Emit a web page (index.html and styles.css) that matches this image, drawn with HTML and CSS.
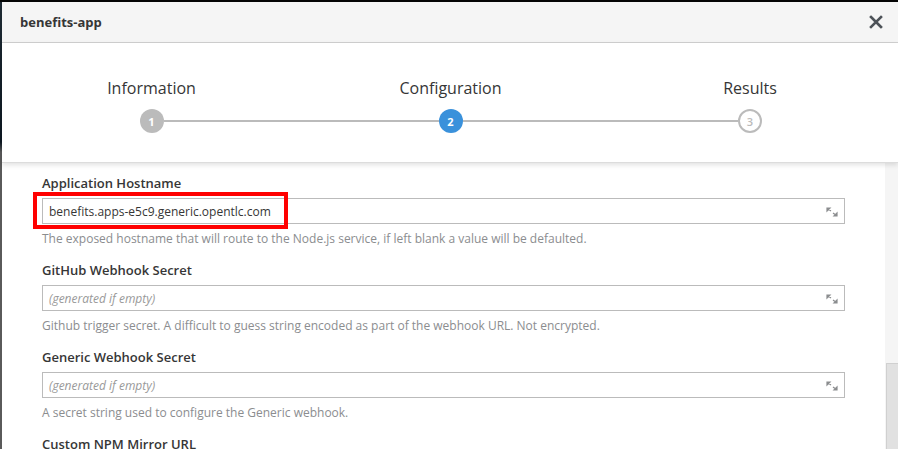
FILE: index.html
```html
<!DOCTYPE html>
<html>
<head>
<meta charset="utf-8">
<link rel="stylesheet" href="styles.css">
</head>
<body>
<div class="screen">
  <div class="edge"></div>
  <div class="modal">
    <div class="modal-header">
      <span class="title">benefits-app</span>
      <svg class="close" width="14" height="14" viewBox="0 0 14 14"><path d="M2 2 L12 12 M12 2 L2 12" stroke="#4d5258" stroke-width="2.6" stroke-linecap="square"/></svg>
    </div>
    <div class="wizard">
      <div class="step first">
        <div class="step-label">Information</div>
        <div class="step-track"><span class="seg"></span><span class="dot done">1</span><span class="seg"></span></div>
      </div>
      <div class="step">
        <div class="step-label">Configuration</div>
        <div class="step-track"><span class="seg"></span><span class="dot active">2</span><span class="seg"></span></div>
      </div>
      <div class="step last">
        <div class="step-label">Results</div>
        <div class="step-track"><span class="seg"></span><span class="dot todo">3</span><span class="seg"></span></div>
      </div>
    </div>
    <div class="body">
      <div class="form">
        <div class="field">
          <div class="label">Application Hostname</div>
          <div class="input-wrap">
            <div class="input"><span class="value">benefits.apps-e5c9.generic.opentlc.com</span>
              <svg class="resize" width="12" height="10" viewBox="0 0 12 10"><path d="M1 1 L4 1 L1 4 Z M1 1 L5 4" stroke="#8b8d8f" stroke-width="1.2" fill="#8b8d8f"/><path d="M11 9 L8 9 L11 6 Z M11 9 L7 6" stroke="#8b8d8f" stroke-width="1.2" fill="#8b8d8f"/></svg>
            </div>
            <div class="highlight"></div>
          </div>
          <div class="help">The exposed hostname that will route to the Node.js service, if left blank a value will be defaulted.</div>
        </div>
        <div class="field">
          <div class="label">GitHub Webhook Secret</div>
          <div class="input-wrap">
            <div class="input"><span class="placeholder">(generated if empty)</span>
              <svg class="resize" width="12" height="10" viewBox="0 0 12 10"><path d="M1 1 L4 1 L1 4 Z M1 1 L5 4" stroke="#8b8d8f" stroke-width="1.2" fill="#8b8d8f"/><path d="M11 9 L8 9 L11 6 Z M11 9 L7 6" stroke="#8b8d8f" stroke-width="1.2" fill="#8b8d8f"/></svg>
            </div>
          </div>
          <div class="help">Github trigger secret. A difficult to guess string encoded as part of the webhook URL. Not encrypted.</div>
        </div>
        <div class="field">
          <div class="label">Generic Webhook Secret</div>
          <div class="input-wrap">
            <div class="input"><span class="placeholder">(generated if empty)</span>
              <svg class="resize" width="12" height="10" viewBox="0 0 12 10"><path d="M1 1 L4 1 L1 4 Z M1 1 L5 4" stroke="#8b8d8f" stroke-width="1.2" fill="#8b8d8f"/><path d="M11 9 L8 9 L11 6 Z M11 9 L7 6" stroke="#8b8d8f" stroke-width="1.2" fill="#8b8d8f"/></svg>
            </div>
          </div>
          <div class="help">A secret string used to configure the Generic webhook.</div>
        </div>
        <div class="field">
          <div class="label">Custom NPM Mirror URL</div>
        </div>
      </div>
      <div class="scrollbar"><div class="thumb"></div></div>
    </div>
  </div>
</div>
</body>
</html>
```
FILE: styles.css
```css
html, body {
  margin: 0;
  padding: 0;
  width: 898px;
  height: 449px;
  overflow: hidden;
  background: #fff;
  font-family: "Open Sans", "Noto Sans", sans-serif;
  color: #363636;
}
.screen {
  display: flex;
  height: 449px;
  border-top: 2px solid #050505;
  box-sizing: border-box;
}
.edge {
  width: 2px;
  flex: none;
  background: linear-gradient(#1e2a33 0, #0d1822 140px, #5a5a5a 150px, #5a5a5a 100%);
}
.modal {
  flex: 1;
  display: flex;
  flex-direction: column;
  min-width: 0;
}
.modal-header {
  height: 40px;
  flex: none;
  background: #f5f5f5;
  border-bottom: 1px solid #d1d1d1;
  display: flex;
  align-items: center;
  justify-content: space-between;
  padding: 0 15px 0 18px;
}
.title {
  font-size: 13px;
  font-weight: 700;
  color: #363636;
}
.close { display: block; }
.wizard {
  height: 119px;
  flex: none;
  display: grid;
  grid-template-columns: 299px 299px 300px;
  background: #fff;
  position: relative;
  z-index: 1;
  border-bottom: 1px solid #dcdcdc;
  box-shadow: 0 2px 5px rgba(0,0,0,0.12);
}
.step {
  display: flex;
  flex-direction: column;
  align-items: center;
  padding-top: 35px;
}
.step-label {
  font-size: 16px;
  line-height: 20px;
  height: 20px;
  color: #363636;
}
.step-track {
  margin-top: 11px;
  width: 100%;
  display: flex;
  align-items: center;
  height: 24px;
}
.seg {
  flex: 1;
  height: 2px;
  background: #bbb;
}
.first .seg:first-child, .last .seg:last-child { background: transparent; }
.dot {
  width: 24px;
  height: 24px;
  box-sizing: border-box;
  border-radius: 50%;
  display: flex;
  align-items: center;
  justify-content: center;
  font-size: 11px;
  font-weight: 700;
  color: #fff;
  flex: none;
}
.dot.done { background: #bbb; }
.dot.active { background: #3a91db; }
.dot.todo { background: #fff; border: 2px solid #bbb; color: #bbb; font-weight: 600; }
.body {
  flex: 1;
  display: flex;
  min-height: 0;
}
.form {
  flex: 1;
  padding: 11px 40px 0 40px;
}
.field { margin-bottom: 14px; }
.label {
  font-size: 13px;
  font-weight: 600;
  line-height: 18px;
  margin-bottom: 6px;
  color: #363636;
}
.input-wrap { position: relative; }
.input {
  height: 26px;
  box-sizing: border-box;
  border: 1px solid #bbb;
  background: #fff;
  display: flex;
  align-items: center;
  justify-content: space-between;
  padding: 0 6px 0 6px;
  font-size: 12px;
}
.value { color: #363636; font-size: 12px; }
.placeholder { color: #999; font-style: italic; font-size: 12px; }
.resize { display: block; margin-top: 2px; }
.highlight {
  position: absolute;
  left: -9px;
  top: -6px;
  width: 255px;
  height: 37px;
  box-sizing: border-box;
  border: 4px solid #f00;
}
.help {
  margin-top: 6px;
  font-size: 12px;
  line-height: 17px;
  color: #8b8d8f;
}
.scrollbar {
  width: 13px;
  flex: none;
  background: #f5f5f5;
  display: flex;
  flex-direction: column;
}
.thumb {
  margin-top: 200px;
  margin-left: 1px;
  flex: 1;
  background: #e1e1e1;
  border: 1px solid #d0d0d0;
  border-right: none;
  border-bottom: none;
}
```
